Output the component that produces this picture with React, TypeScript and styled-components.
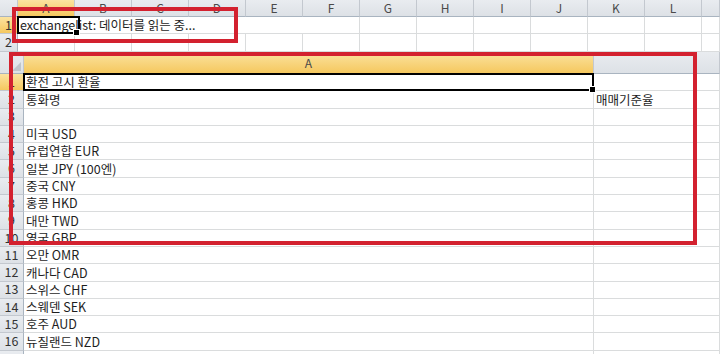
import React from 'react';
import styled, { createGlobalStyle, css } from 'styled-components';

const GlobalStyle = createGlobalStyle`
    html, body {
        margin: 0;
        padding: 0;
        background: #ffffff;
        overflow: hidden;
    }
    body {
        font-family: 'Noto Sans CJK KR', 'Noto Sans', sans-serif;
    }
`;

const ROW_H = '17.3px';
const GRID = '#dadcdd';
const HEAD_BG = 'linear-gradient(#e9ecf0, #dde1e6)';
const HEAD_ACTIVE = 'linear-gradient(#fbe3a0, #f5c85f)';
const RED = '#d3212f';

const topCols = ['A', 'B', 'C', 'D', 'E', 'F', 'G', 'H', 'I', 'J', 'K', 'L', ''];

const rows: { a: string; k?: string }[] = [
    { a: '환전 고시 환율' },
    { a: '통화명', k: '매매기준율' },
    { a: '' },
    { a: '미국 USD' },
    { a: '유럽연합 EUR' },
    { a: '일본 JPY (100엔)' },
    { a: '중국 CNY' },
    { a: '홍콩 HKD' },
    { a: '대만 TWD' },
    { a: '영국 GBP' },
    { a: '오만 OMR' },
    { a: '캐나다 CAD' },
    { a: '스위스 CHF' },
    { a: '스웨덴 SEK' },
    { a: '호주 AUD' },
    { a: '뉴질랜드 NZD' },
];

const App = () => {
    return (
        <Page>
            <GlobalStyle />
            <TopSheet>
                <Corner />
                {topCols.map((c, i) => (
                    <ColHead key={c + i} active={c === 'A'}>
                        {c}
                    </ColHead>
                ))}

                <RowHead active>1</RowHead>
                <Cell span={5} frame={59}>
                    exchangelist: 데이터를 읽는 중...
                </Cell>
                {topCols.slice(5).map((c, i) => (
                    <Cell key={'r1' + i} />
                ))}

                <RowHead>2</RowHead>
                {topCols.map((c, i) => (
                    <Cell key={'r2' + i} />
                ))}
            </TopSheet>

            <BottomSheet>
                <Corner>
                    <SelectAll />
                </Corner>
                <ColHead active>A</ColHead>
                <ColHead />

                {rows.map((r, i) => (
                    <React.Fragment key={i}>
                        <RowHead active={i === 0}>{i + 1}</RowHead>
                        <Cell selected={i === 0}>{r.a}</Cell>
                        <Cell>{r.k}</Cell>
                    </React.Fragment>
                ))}
                {/* next row, only its top edge shows */}
                <RowHead />
                <Cell />
                <Cell />
            </BottomSheet>

            <RedBox top={7} left={12} width={226} height={36} />
            <RedBox top={52} left={9} width={688} height={193} />
        </Page>
    );
};
export default App;

const Page = styled.div`
    position: relative;
    width: 720px;
    height: 354px;
    overflow: hidden;
    background: #ffffff;
`;

const TopSheet = styled.div`
    display: grid;
    grid-template-columns: 18px repeat(12, 57px) 1fr;
    grid-template-rows: 17px 17px 18px;
`;

const BottomSheet = styled.div`
    display: grid;
    grid-template-columns: 24px 570px 1fr;
    grid-template-rows: 22px;
    grid-auto-rows: ${ROW_H};
`;

const Corner = styled.div`
    position: relative;
    background: ${HEAD_BG};
    border-right: 1px solid #c3c8cf;
    border-bottom: 1px solid #a9b4c0;
`;

const SelectAll = styled.div`
    position: absolute;
    right: 2px;
    bottom: 2px;
    width: 0;
    height: 0;
    border-left: 9px solid transparent;
    border-bottom: 9px solid #c0c5cb;
`;

const ColHead = styled.div<{ active?: boolean }>`
    display: flex;
    align-items: center;
    justify-content: center;
    background: ${(p) => (p.active ? HEAD_ACTIVE : HEAD_BG)};
    border-right: 1px solid #c3c8cf;
    border-bottom: 1px solid #a9b4c0;
    color: #4a4a4a;
    font-size: 12px;
    line-height: 1;
`;

const RowHead = styled.div<{ active?: boolean }>`
    display: flex;
    align-items: center;
    justify-content: center;
    background: ${(p) => (p.active ? HEAD_ACTIVE : HEAD_BG)};
    border-right: 1px solid #a9b4c0;
    border-bottom: 1px solid #c3c8cf;
    color: #333333;
    font-size: 12.5px;
    line-height: 1;
`;

const Cell = styled.div<{ span?: number; frame?: number; selected?: boolean }>`
    position: relative;
    display: flex;
    align-items: flex-end;
    padding: 0 2px 1px 2px;
    border-right: ${(p) => (p.span ? 'none' : `1px solid ${GRID}`)};
    border-bottom: 1px solid ${GRID};
    color: #1e1e1e;
    font-size: 12.5px;
    line-height: 15px;
    white-space: nowrap;
    overflow: visible;
    ${(p) => p.span && `grid-column: span ${p.span};`}

    ${(p) =>
        (p.frame || p.selected) &&
        css`
            &::after {
                content: '';
                position: absolute;
                left: -1px;
                top: -1px;
                bottom: -1px;
                width: ${p.frame ? `${p.frame}px` : 'auto'};
                right: ${p.frame ? 'auto' : '-1px'};
                border: 2px solid #000000;
                pointer-events: none;
            }
            &::before {
                content: '';
                position: absolute;
                z-index: 2;
                left: ${p.frame ? `${p.frame - 4}px` : 'auto'};
                right: ${p.frame ? 'auto' : '-3px'};
                bottom: -3px;
                width: 5px;
                height: 5px;
                background: #000000;
                border: 1px solid #ffffff;
            }
        `}
`;

const RedBox = styled.div<{ top: number; left: number; width: number; height: number }>`
    position: absolute;
    top: ${(p) => p.top}px;
    left: ${(p) => p.left}px;
    width: ${(p) => p.width}px;
    height: ${(p) => p.height}px;
    box-sizing: border-box;
    border: 4px solid ${RED};
    pointer-events: none;
`;
